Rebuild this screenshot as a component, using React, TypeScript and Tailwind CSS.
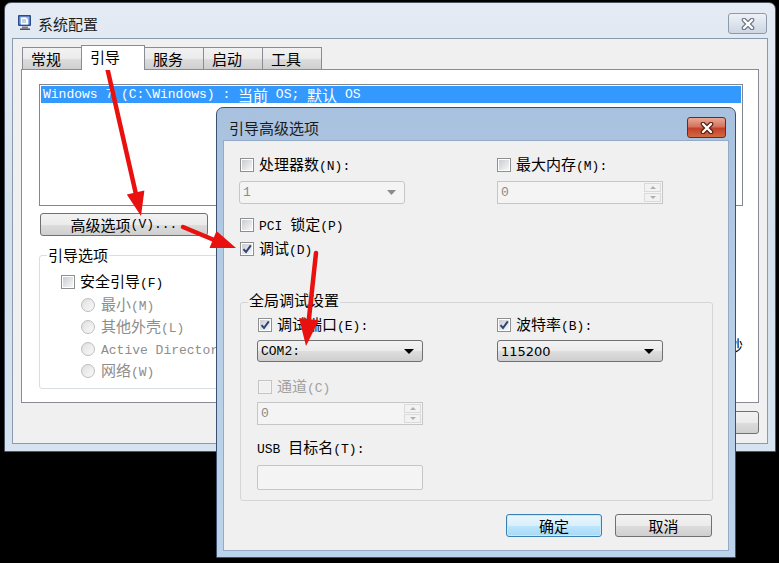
import React from "react";

// Latin runs get a narrow mono face so they sit at half the width of CJK glyphs
function M({ t }: { t: string }) {
  const parts = t.split(/([\x20-\x7e]+)/).filter(Boolean);
  return (
    <>
      {parts.map((p, i) =>
        /^[\x20-\x7e]+$/.test(p) ? (
          <span key={i} className="font-['Liberation_Mono',monospace] text-[13px] whitespace-pre">
            {p}
          </span>
        ) : (
          <span key={i}>{p}</span>
        )
      )}
    </>
  );
}

const btnFace =
  "flex items-center rounded-[3px] border border-[#707070] bg-[linear-gradient(#f2f2f2_0%,#ebebeb_50%,#dddddd_51%,#cfcfcf_100%)] leading-none";
const grayBtn = `${btnFace} h-[23px] justify-center`;
const comboBtn = `${btnFace} mt-[7px] h-[22px] w-[166px] justify-between pl-[3px] pr-[8px]`;

function Check({ label, checked, disabled }: { label: string; checked?: boolean; disabled?: boolean }) {
  return (
    <div className="flex h-[16px] items-center gap-[5px]">
      <span
        className={`flex h-[14px] w-[14px] shrink-0 items-center justify-center border ${
          disabled ? "border-[#c4c4c4] bg-[#f4f4f4]" : "border-[#8e8f8f] bg-white"
        }`}
      >
        <span
          className={`flex h-[10px] w-[10px] items-center justify-center ${
            disabled ? "bg-[#f0f0f0]" : "bg-gradient-to-br from-[#c9ccd1] to-[#f7f7f7]"
          }`}
        >
          {checked && (
            <svg width="10" height="10" viewBox="0 0 10 10">
              <path d="M1.5 5.2 L4 8 L8.8 1.4" fill="none" stroke="#2e4379" strokeWidth="2" />
            </svg>
          )}
        </span>
      </span>
      <span className={`leading-[16px] whitespace-pre ${disabled ? "text-[#a0a0a0]" : ""}`}>
        <M t={label} />
      </span>
    </div>
  );
}

function Radio({ label }: { label: string }) {
  return (
    <div className="flex h-[16px] items-center gap-[6px] text-[#8d8d8d]">
      <span className="flex h-[14px] w-[14px] items-center justify-center rounded-full border border-[#bdbdbd] bg-gradient-to-br from-[#dedede] to-[#fafafa]">
        <span className="h-[8px] w-[8px] rounded-full bg-gradient-to-br from-[#e4e4e4] to-[#f6f6f6]" />
      </span>
      <span className="leading-[16px] whitespace-pre">
        <M t={label} />
      </span>
    </div>
  );
}

function Tri({ color, w = 9, h = 5 }: { color: string; w?: number; h?: number }) {
  return (
    <svg width={w} height={h} viewBox={`0 0 ${w} ${h}`}>
      <polygon points={`0,0 ${w},0 ${w / 2},${h}`} fill={color} />
    </svg>
  );
}

function Spin({ value }: { value: string }) {
  return (
    <div className="flex h-[23px] w-[166px] items-stretch border border-[#c6c6c6] bg-[#f4f4f4] text-[#8a8a8a]">
      <span className="flex flex-1 items-center pl-[3px] leading-none">
        <M t={value} />
      </span>
      <div className="m-[1px] flex w-[17px] flex-col gap-[1px]">
        <div className="flex flex-1 items-center justify-center border border-[#dadada] bg-[#f2f2f2]">
          <svg width="6" height="3" viewBox="0 0 6 3">
            <polygon points="0,3 6,3 3,0" fill="#b0b0b0" />
          </svg>
        </div>
        <div className="flex flex-1 items-center justify-center border border-[#dadada] bg-[#f2f2f2]">
          <Tri color="#b0b0b0" w={6} h={3} />
        </div>
      </div>
    </div>
  );
}

function CloseX({ outline }: { outline: string }) {
  return (
    <svg width="14" height="12" viewBox="0 0 14 12">
      <path d="M3 2 L11 10 M11 2 L3 10" stroke={outline} strokeWidth="4.6" strokeLinecap="round" />
      <path d="M3 2 L11 10 M11 2 L3 10" stroke="#ffffff" strokeWidth="2.4" strokeLinecap="round" />
    </svg>
  );
}

function ConfigIcon() {
  return (
    <svg width="16" height="17" viewBox="0 0 16 17">
      <rect x="1" y="1" width="13" height="11" rx="1" fill="#2f4a8a" />
      <rect x="2.5" y="2.5" width="10" height="8" fill="#8fb6e8" />
      <path d="M4 3.5 h5 l2 2 v5 h-7z" fill="#ffffff" />
      <path d="M5 6h4 M5 8h4" stroke="#6a8cc0" strokeWidth="0.8" />
      <rect x="5" y="12.5" width="6" height="2" fill="#7a7f88" />
      <rect x="3" y="14.5" width="10" height="1.5" fill="#4d535c" />
    </svg>
  );
}

const tabs = ["常规", "引导", "服务", "启动", "工具"];

function SystemConfig() {
  return (
    <div className="absolute left-[4px] top-[2px] flex h-[450px] w-[772px] flex-col rounded-t-[7px] border border-[#4a5566] bg-gradient-to-b from-[#e4ebf4] via-[#d3dfec] to-[#d6e3f0] px-[7px] pb-[7px]">
      <div className="flex h-[35px] shrink-0 items-start justify-between pl-[5px] pr-[1px]">
        <div className="flex items-start">
          <div className="mt-[11px]">
            <ConfigIcon />
          </div>
          <span className="ml-[5px] mt-[12px] leading-[18px] text-[#1e1e1e]">系统配置</span>
        </div>
        <div className="mt-[10px] flex h-[21px] w-[39px] items-center justify-center rounded-[3px] border border-[#8e9aab] bg-gradient-to-b from-[#eef2f7] to-[#cdd6e2]">
          <CloseX outline="#6c7683" />
        </div>
      </div>

      <div className="flex flex-1 flex-col border border-[#8a9bb0] bg-[#f0f0f0] px-[8px] pt-[6px]">
        <div className="flex h-[24px] items-end pl-[1px]">
          {tabs.map((t, i) =>
            i === 1 ? (
              <div
                key={t}
                className="relative z-10 -mb-px -ml-px flex h-[25px] w-[64px] items-start border border-b-0 border-[#898c95] bg-white pl-[8px] pt-[3px] leading-[16px]"
              >
                {t}
              </div>
            ) : (
              <div
                key={t}
                className={`flex h-[22px] ${i === 0 ? "w-[60px]" : "-ml-px w-[60px]"} items-center border border-b-0 border-[#898c95] bg-[linear-gradient(#f2f2f2_0%,#ebebeb_50%,#dddddd_51%,#cfcfcf_100%)] pl-[8px] leading-[16px]`}
              >
                {t}
              </div>
            )
          )}
        </div>

        <div className="flex h-[334px] flex-col border border-[#898c95] bg-white pl-[17px] pr-[15px] pt-[14px]">
          <div className="h-[122px] border border-[#828790] bg-white p-px">
            <div className="flex h-[17px] items-center bg-[#3399ff] pl-[2px] leading-none text-white">
              <M t="Windows 7 (C:\Windows) : 当前 OS; 默认 OS" />
            </div>
          </div>

          <div className="mt-[7px] flex">
            <div className="flex flex-col">
              <div className={`${grayBtn} ml-px w-[168px]`}>
                <M t="高级选项(V)..." />
              </div>
              <div className="mt-[19px] h-[134px] w-[360px] rounded-[3px] border border-[#d5dfe5]">
                <div className="-mt-[9px] ml-[7px] w-fit bg-white px-[1px] leading-[16px]">引导选项</div>
                <div className="mt-[11px] pl-[21px]">
                  <Check label="安全引导(F)" />
                </div>
                <div className="mt-[7px] flex flex-col gap-[6px] pl-[41px]">
                  <Radio label="最小(M)" />
                  <Radio label="其他外壳(L)" />
                  <Radio label="Active Directory 修复" />
                  <Radio label="网络(W)" />
                </div>
              </div>
            </div>
            <div className="flex flex-1 justify-end pt-[124px]">
              <span className="leading-[16px]">秒</span>
            </div>
          </div>
        </div>

        <div className="mt-[8px] flex justify-end gap-[6px]">
          {["确定", "取消", "应用(A)", "帮助"].map((b) => (
            <div key={b} className={`${grayBtn} w-[75px]`}>
              <M t={b} />
            </div>
          ))}
        </div>
      </div>
    </div>
  );
}

function BootAdvanced() {
  return (
    <div className="absolute left-[216px] top-[107px] flex h-[451px] w-[520px] flex-col rounded-t-[7px] border border-[#3a5270] bg-gradient-to-b from-[#a8c1de] via-[#b9cfe8] to-[#bcd3ec] px-[6px] pb-[6px]">
      <div className="flex h-[32px] shrink-0 items-start justify-between pl-[6px] pr-[3px]">
        <span className="mt-[11px] leading-[18px] text-[#1a1a1a]">引导高级选项</span>
        <div className="mt-[9px] flex h-[21px] w-[39px] items-center justify-center rounded-[3px] border border-[#6b2a1f] bg-[linear-gradient(#e8a996_0%,#d6735c_45%,#c2412a_55%,#d26a44_100%)]">
          <CloseX outline="#5a1d10" />
        </div>
      </div>

      <div className="flex flex-1 flex-col border border-[#93abc6] bg-[#f0f0f0] pl-[15px] pr-[16px] pt-[16px]">
        <div className="grid grid-cols-[258px_166px]">
          <div className="ml-px">
            <Check label="处理器数(N):" />
          </div>
          <Check label="最大内存(M):" />
          <div className="mt-[8px] flex h-[23px] w-[166px] items-center justify-between rounded-[3px] border border-[#c6c6c6] bg-[#f4f4f4] pl-[3px] pr-[8px] leading-none text-[#8a8a8a]">
            <M t="1" />
            <Tri color="#8c8c8c" />
          </div>
          <div className="mt-[8px]">
            <Spin value="0" />
          </div>
        </div>

        <div className="ml-px mt-[13px]">
          <Check label="PCI 锁定(P)" />
        </div>
        <div className="ml-px mt-[8px]">
          <Check label="调试(D)" checked />
        </div>

        <div className="ml-px mt-[45px] w-[473px] rounded-[3px] border border-[#d5d5d5] pb-[10px]">
          <div className="-mt-[11px] ml-[7px] w-fit bg-[#f0f0f0] px-[1px] leading-[16px]">全局调试设置</div>
          <div className="mt-[9px] pl-[16px]">
            <div className="grid grid-cols-[240px_166px]">
              <div className="ml-px">
                <Check label="调试端口(E):" checked />
              </div>
              <Check label="波特率(B):" checked />
              <div className={comboBtn}>
                <M t="COM2:" />
                <Tri color="#000000" w={10} h={5} />
              </div>
              <div className={comboBtn}>
                <span className="font-['DejaVu_Sans',sans-serif] text-[13px]">115200</span>
                <Tri color="#000000" w={10} h={5} />
              </div>
            </div>
            <div className="ml-px mt-[17px]">
              <Check label="通道(C)" disabled />
            </div>
            <div className="mt-[7px]">
              <Spin value="0" />
            </div>
            <div className="mt-[14px] leading-[16px]">
              <M t="USB 目标名(T):" />
            </div>
            <div className="mt-[7px] h-[25px] w-[166px] rounded-[2px] border border-[#c6c6c6] bg-[#f4f4f4]" />
          </div>
        </div>

        <div className="mt-[13px] flex justify-end gap-[13px]">
          <div className="flex h-[23px] w-[96px] items-center justify-center rounded-[3px] border border-[#3c7fb1] bg-[linear-gradient(#eaf6fd_0%,#d9f0fc_50%,#bee6fd_51%,#a7d9f5_100%)] leading-none shadow-[inset_0_0_0_1px_#c4eafc]">
            确定
          </div>
          <div className={`${grayBtn} w-[97px]`}>取消</div>
        </div>
      </div>
    </div>
  );
}

function Arrows() {
  const red = "#e8110f";
  return (
    <svg className="pointer-events-none absolute inset-0" width="779" height="563" viewBox="0 0 779 563">
      <line x1="107" y1="67" x2="135.6" y2="192.6" stroke={red} strokeWidth="4.5" strokeLinecap="round" />
      <polygon points="141,216 126.8,194.6 144.4,190.6" fill={red} />
      <line x1="183" y1="227" x2="213" y2="239.5" stroke={red} strokeWidth="4.5" strokeLinecap="round" />
      <polygon points="236,248 209.5,248 216.5,231" fill={red} />
      <line x1="316" y1="253" x2="308.9" y2="319.1" stroke={red} strokeWidth="4.5" strokeLinecap="round" />
      <polygon points="306,346 299,318 318.8,320.2" fill={red} />
    </svg>
  );
}

export default function App() {
  return (
    <div className="relative h-[563px] w-[779px] overflow-hidden bg-black font-['Noto_Sans_CJK_SC',sans-serif] text-[15px] text-black">
      <SystemConfig />
      <BootAdvanced />
      <Arrows />
    </div>
  );
}
